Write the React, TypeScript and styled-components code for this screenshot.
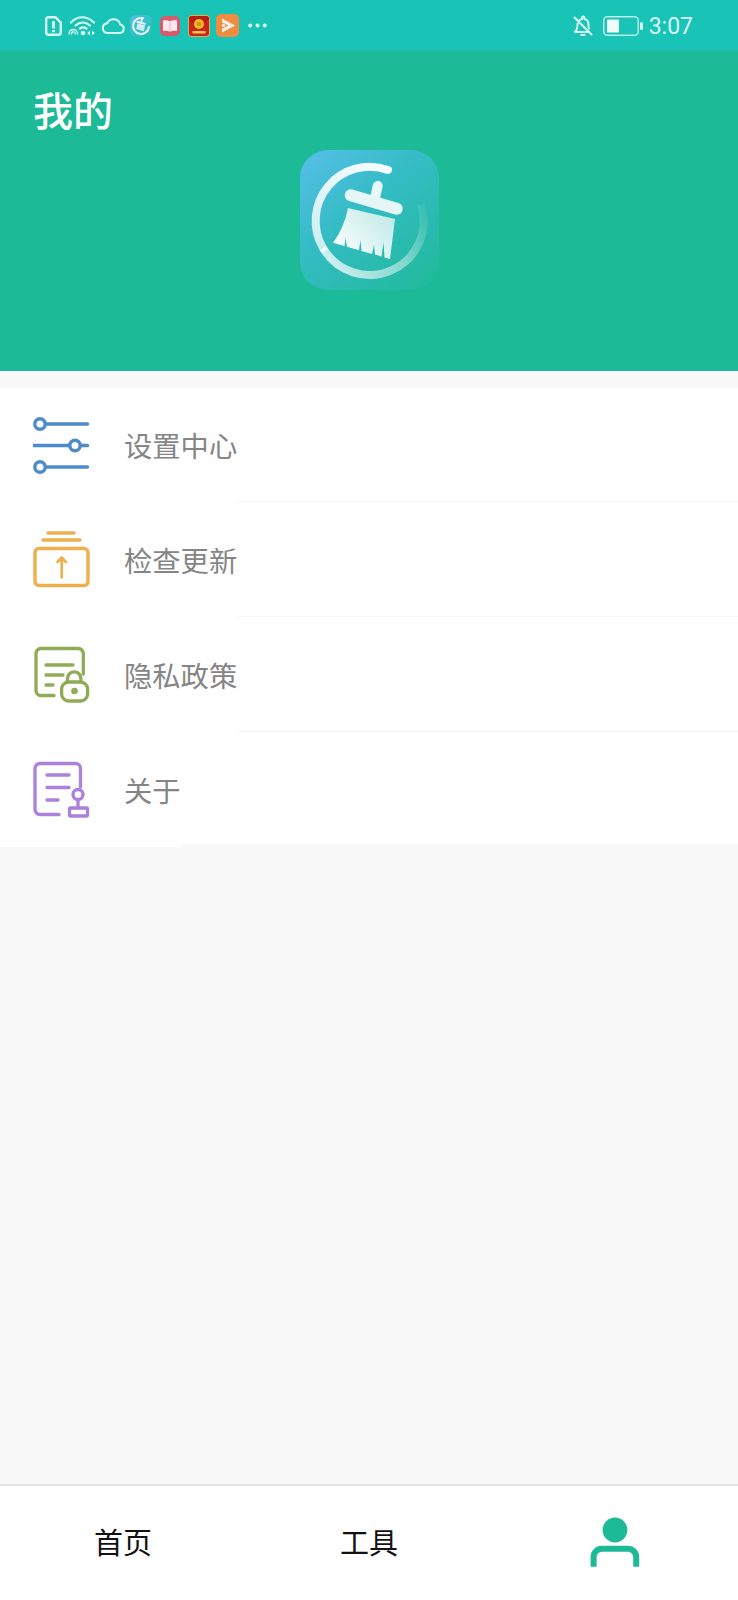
import React from "react";
import styled, { createGlobalStyle } from "styled-components";

const Global = createGlobalStyle`
  html, body { margin: 0; padding: 0; background: #f8f8f8; }
  body { font-family: "Noto Sans CJK SC", "Liberation Sans", sans-serif; }
`;

const Screen = styled.div`
  width: 738px;
  height: 1600px;
  display: flex;
  flex-direction: column;
  background: #f8f8f8;
  overflow: hidden;
`;

const StatusBar = styled.div`
  height: 51px;
  flex: none;
  background: #19c3b6;
  display: flex;
  align-items: center;
  padding: 0 45px;
  box-sizing: border-box;
`;

const StatusLeft = styled.div`
  display: flex;
  align-items: center;
`;

const StatusGlyph = styled.span<{ $gap: number }>`
  display: flex;
  margin-left: ${(p) => p.$gap}px;
`;

const StatusRight = styled.div`
  margin-left: auto;
  display: flex;
  align-items: center;
  gap: 9px;
`;

const Clock = styled.span`
  font-family: Roboto, "Liberation Sans", sans-serif;
  font-size: 23px;
  line-height: 27px;
  color: #d8f7f3;
  margin: 1px 0 0 -4px;
`;

const Header = styled.header`
  height: 320px;
  flex: none;
  background: #1cba96;
  display: flex;
  flex-direction: column;
  box-sizing: border-box;
  padding: 33px 33px 0;
`;

const Title = styled.h1`
  margin: 0;
  font-size: 40px;
  line-height: 50px;
  font-weight: 500;
  color: #ffffff;
`;

const LogoTile = styled.div`
  width: 139px;
  height: 140px;
  margin: 16px auto 0;
  border-radius: 28px;
  overflow: hidden;
  background: linear-gradient(140deg, #58bfea 0%, #34bcc4 42%, #22ba9f 92%, #1fba9b 100%);
`;

const Menu = styled.div`
  margin-top: 17px;
  display: flex;
  flex-direction: column;
`;

const Row = styled.div`
  height: 115px;
  display: flex;
  align-items: stretch;

  &:first-child {
    height: 114px;
  }
`;

const IconSlot = styled.div`
  width: 124px;
  flex: none;
  box-sizing: border-box;
  padding: 1px 0 0 33px;
  display: flex;
  align-items: center;
  background: #ffffff;

  ${Row}:first-child & {
    padding-top: 0;
  }
`;

const Label = styled.span`
  display: flex;
  align-items: center;
  box-sizing: border-box;
  padding-bottom: 1px;
  font-size: 28.300px;
  color: #858585;
  background: #ffffff;
`;

const Rule = styled.div<{ $last?: boolean }>`
  flex: 1;
  background: #ffffff;
  margin-bottom: ${(p) => (p.$last ? "2px" : "0")};
  border-bottom: 1px solid ${(p) => (p.$last ? "#f9f9f9" : "#f5f5f5")};
`;

const Spacer = styled.div`
  flex: 1;
`;

const TabBar = styled.nav`
  height: 116px;
  flex: none;
  display: grid;
  grid-template-columns: repeat(3, 1fr);
  background: #ffffff;
  border-top: 2px solid #e6e6e6;
  box-sizing: border-box;
`;

const Tab = styled.div`
  display: flex;
  align-items: center;
  justify-content: center;
  font-size: 29px;
  color: #111111;
  padding-bottom: 4px;
`;

const SimIcon = () => (
  <svg width="17" height="20" viewBox="0 0 17 20" fill="none" stroke="#d8f7f3" strokeWidth="2.400">
    <path d="M3.500 1.200h7l5.300 5.500v9.800a2.400 2.400 0 0 1-2.400 2.300h-9.900a2.400 2.400 0 0 1-2.300-2.300v-13a2.400 2.400 0 0 1 2.300-2.300z" />
    <path d="M8.500 5v7.500M8.500 14v2.300" strokeWidth="2.800" />
  </svg>
);

const WifiIcon = () => (
  <svg width="28" height="22" viewBox="0 0 28 22" fill="none" stroke="#d8f7f3" strokeLinecap="round">
    <path d="M3 7.500C9 .500 19 .500 26 7.500" strokeWidth="2.200" />
    <path d="M7.500 10.500c4.500-4 10-4 14.500 0" strokeWidth="2.200" />
    <path d="M12 13.500c2-1.400 4.500-1.400 6.500 0" strokeWidth="2.200" />
    <path d="M1 19c-.5-6 9-6 8.500 0M3.400 19c0-3 3.800-3 3.700 0" strokeWidth="1.300" />
    <circle cx="15" cy="18" r="2.300" fill="#d8f7f3" stroke="none" />
    <path d="M22 15.500l-2.800 2.500 2.800 2.500z" fill="#d8f7f3" stroke="none" />
    <path d="M24 15.500l2.800 2.500-2.800 2.500z" fill="#d8f7f3" stroke="none" />
  </svg>
);

const CloudIcon = () => (
  <svg width="24" height="16" viewBox="0 0 24 16" fill="none" stroke="#d8f7f3" strokeWidth="2">
    <path d="M6 15h12.500a4.300 4.300 0 0 0 .8-8.500A7 7 0 0 0 6.200 5.300 4.900 4.900 0 0 0 6 15z" />
  </svg>
);

const CleanerBadge = () => (
  <svg width="22" height="24" viewBox="0 0 22 24">
    <defs>
      <linearGradient id="miniTile" x1="0" y1="0" x2="1" y2="1">
        <stop offset="0" stopColor="#58bde6" />
        <stop offset="1" stopColor="#1ec0b0" />
      </linearGradient>
    </defs>
    <rect x="0" y="1" width="22" height="22" rx="6" fill="url(#miniTile)" />
    <path d="M13 4.200A8 8 0 1 0 19 13" fill="none" stroke="#e3f6f7" strokeWidth="2" strokeLinecap="round" />
    <path d="M7.500 9.500l7.500 1.800-1 6-7.800-2.300z" fill="#cfeef0" />
    <path d="M7.500 8l7.500 1.800M11.800 5.500l-.6 3" stroke="#e8f8f8" strokeWidth="1.800" strokeLinecap="round" />
  </svg>
);

const BookBadge = () => (
  <svg width="20" height="20" viewBox="0 0 20 20">
    <rect width="20" height="20" rx="5" fill="#d65b6c" />
    <path d="M3 4.500c2.500-.6 5-.4 7 .8 2-1.200 4.500-1.400 7-.8v10.500c-2.500-.6-5-.4-7 .8-2-1.200-4.500-1.400-7-.8z" fill="#fde9ed" />
    <path d="M10 5.500v10" stroke="#e7a3ac" strokeWidth="0.800" />
  </svg>
);

const RedPacketBadge = () => (
  <svg width="22" height="22" viewBox="0 0 22 22">
    <rect width="22" height="22" rx="4" fill="#d8b24a" />
    <rect x="1" y="1" width="20" height="20" rx="3" fill="#cc2420" />
    <path d="M1 4c5 6.500 15 6.500 20 0V4a3 3 0 0 0-3-3H4a3 3 0 0 0-3 3z" fill="#b81a16" />
    <circle cx="11" cy="9" r="5" fill="#f2bd22" />
    <circle cx="11" cy="9" r="2.300" fill="#d98d14" />
    <rect x="4.500" y="16" width="13" height="2.500" fill="#f1c74a" />
  </svg>
);

const PlayBadge = () => (
  <svg width="23" height="23" viewBox="0 0 23 23">
    <rect width="23" height="23" rx="5" fill="#ee8d42" />
    <path d="M6 4.500l13 7-13 7v-3.800l6.400-3.300L6 8.200z" fill="#fdf1e6" />
    <circle cx="7.500" cy="11.400" r="1.700" fill="#fdf1e6" />
  </svg>
);

const Dots = () => (
  <svg width="19" height="5" viewBox="0 0 19 5" fill="#d8f7f3">
    <circle cx="2.200" cy="2.500" r="2" />
    <circle cx="9.500" cy="2.500" r="2" />
    <circle cx="16.800" cy="2.500" r="2" />
  </svg>
);

const MutedBell = () => (
  <svg width="22" height="22" viewBox="0 0 22 22" fill="none" stroke="#d8f7f3" strokeWidth="2" strokeLinecap="round" strokeLinejoin="round">
    <path d="M3 17h13.500M17 13.500c-.4-1-.6-2-.6-3.200V9a5 5 0 0 0-4-5V2.800a1.200 1.200 0 0 0-2.400 0V4c-1 .2-1.800.7-2.400 1.300M5.600 8.500c-.2.500-.2 1-.2 1.500v1.500c0 2.500-.9 4-2.400 5.500" />
    <path d="M9.200 20h3.400" />
    <path d="M2.500 2.500l17 17" />
  </svg>
);

const Battery = () => (
  <svg width="41" height="20" viewBox="0 0 41 20" fill="none">
    <rect x="0.800" y="0.800" width="34.400" height="18.400" rx="3.500" stroke="#bdeee9" strokeWidth="1.400" />
    <rect x="4" y="3.500" width="12" height="13" rx="1" fill="#eefcfa" />
    <rect x="37" y="6" width="3" height="8" rx="1.500" fill="#d8f7f3" />
  </svg>
);

const CleanerLogo = () => (
  <svg width="138" height="140" viewBox="0 0 138 140" fill="none">
    <defs>
      <linearGradient id="ringFade" gradientUnits="userSpaceOnUse" x1="80" y1="15" x2="25" y2="100">
        <stop offset="0" stopColor="#ffffff" stopOpacity="0.950" />
        <stop offset="1" stopColor="#ffffff" stopOpacity="0.750" />
      </linearGradient>
      <linearGradient id="ringTail" gradientUnits="userSpaceOnUse" x1="25" y1="100" x2="122" y2="50">
        <stop offset="0" stopColor="#ffffff" stopOpacity="0.750" />
        <stop offset="0.600" stopColor="#ffffff" stopOpacity="0.420" />
        <stop offset="1" stopColor="#ffffff" stopOpacity="0.040" />
      </linearGradient>
      <linearGradient id="brush" gradientUnits="userSpaceOnUse" x1="85" y1="62" x2="45" y2="100">
        <stop offset="0" stopColor="#c4ebe9" />
        <stop offset="1" stopColor="#f3fcfb" />
      </linearGradient>
    </defs>
    <path d="M88 20A54 54 0 0 0 23 98" stroke="url(#ringFade)" strokeWidth="8" strokeLinecap="round" />
    <path d="M23 98A54 54 0 0 0 121 54" stroke="url(#ringTail)" strokeWidth="8" />
    <path d="M77.700 36L75 48" stroke="#e9f8f8" strokeWidth="10" strokeLinecap="round" />
    <path d="M50.700 45.300L96.700 58.700" stroke="#e4f6f6" strokeWidth="12" strokeLinecap="round" />
    <path d="M48 58L95 69L90 109L84.500 107.400L83.500 92L81.500 106.500L75 104.600L74 95L72 104L61.500 101L60.500 90L59 100.300L47 96.800L45.500 88L44.500 96L33 92.700Q44 78 48 58z" fill="url(#brush)" />
  </svg>
);

const SlidersIcon = () => (
  <svg width="60" height="60" viewBox="0 0 60 60" fill="none" stroke="#4d8cca" strokeWidth="3.400" strokeLinecap="round">
    <circle cx="7" cy="9" r="5.200" />
    <path d="M12.500 9H54.500" />
    <path d="M1 30.500h35M48 30.500h6.500" />
    <circle cx="42" cy="30.500" r="5.200" />
    <circle cx="7" cy="52" r="5.200" />
    <path d="M12.500 52H54.500" />
  </svg>
);

const UpdateIcon = () => (
  <svg width="60" height="60" viewBox="0 0 60 60" fill="none" stroke="#eeb04c" strokeWidth="3.400" strokeLinecap="round" strokeLinejoin="round">
    <path d="M15 3h26M10 10h37" />
    <rect x="2" y="18.500" width="53" height="37" rx="4" />
    <path d="M28.700 47.500V27.500M24.500 32l4.200-4.500 4.200 4.500" strokeWidth="2.600" />
  </svg>
);

const PrivacyIcon = () => (
  <svg width="60" height="60" viewBox="0 0 60 60" fill="none" stroke="#90aa55" strokeWidth="3.300" strokeLinecap="round" strokeLinejoin="round">
    <path d="M21 50.500H8a5 5 0 0 1-5-5V8.500a5 5 0 0 1 5-5h37.300a5 5 0 0 1 5 5V29" />
    <path d="M13 20h27M13 30h17M13 40h7" />
    <rect x="28.600" y="37" width="26" height="19" rx="7" />
    <path d="M34.500 37v-3.500a6.700 6.700 0 0 1 13.400 0V37" />
    <circle cx="41.500" cy="46" r="3.300" fill="#90aa55" stroke="none" />
  </svg>
);

const AboutIcon = () => (
  <svg width="60" height="60" viewBox="0 0 60 60" fill="none" stroke="#ab81dd" strokeWidth="3.300" strokeLinecap="round" strokeLinejoin="round">
    <path d="M26 54.500H7a5 5 0 0 1-5-5V8.500a5 5 0 0 1 5-5h35.500a5 5 0 0 1 5 5V27" />
    <path d="M14 15h22M14 27.500h22M14 40h11" />
    <circle cx="45" cy="34.500" r="5" />
    <path d="M45 40v8" />
    <rect x="36.500" y="48" width="18" height="8" rx="0.800" />
  </svg>
);

const PersonIcon = () => (
  <svg width="50" height="52" viewBox="0 0 50 52" fill="none">
    <circle cx="25" cy="15" r="12.400" fill="#1cba96" />
    <path d="M3.600 51.700V42a8.200 8.200 0 0 1 8.200-8.200h26.200a8.200 8.200 0 0 1 8.200 8.200v9.700" stroke="#1cba96" strokeWidth="6" />
  </svg>
);

const menu = [
  { label: "设置中心", icon: <SlidersIcon /> },
  { label: "检查更新", icon: <UpdateIcon /> },
  { label: "隐私政策", icon: <PrivacyIcon /> },
  { label: "关于", icon: <AboutIcon /> },
];

export default function App() {
  return (
    <>
      <Global />
      <Screen>
        <StatusBar>
          <StatusLeft>
            <StatusGlyph $gap={0}><SimIcon /></StatusGlyph>
            <StatusGlyph $gap={6}><WifiIcon /></StatusGlyph>
            <StatusGlyph $gap={5}><CloudIcon /></StatusGlyph>
            <StatusGlyph $gap={5}><CleanerBadge /></StatusGlyph>
            <StatusGlyph $gap={8}><BookBadge /></StatusGlyph>
            <StatusGlyph $gap={8}><RedPacketBadge /></StatusGlyph>
            <StatusGlyph $gap={6}><PlayBadge /></StatusGlyph>
            <StatusGlyph $gap={9}><Dots /></StatusGlyph>
          </StatusLeft>
          <StatusRight>
            <MutedBell />
            <Battery />
            <Clock>3:07</Clock>
          </StatusRight>
        </StatusBar>
        <Header>
          <Title>我的</Title>
          <LogoTile>
            <CleanerLogo />
          </LogoTile>
        </Header>
        <Menu>
          {menu.map((item, i) => (
            <Row key={item.label}>
              <IconSlot>{item.icon}</IconSlot>
              <Label>{item.label}</Label>
              <Rule $last={i === menu.length - 1} />
            </Row>
          ))}
        </Menu>
        <Spacer />
        <TabBar>
          <Tab>首页</Tab>
          <Tab>工具</Tab>
          <Tab>
            <PersonIcon />
          </Tab>
        </TabBar>
      </Screen>
    </>
  );
}
